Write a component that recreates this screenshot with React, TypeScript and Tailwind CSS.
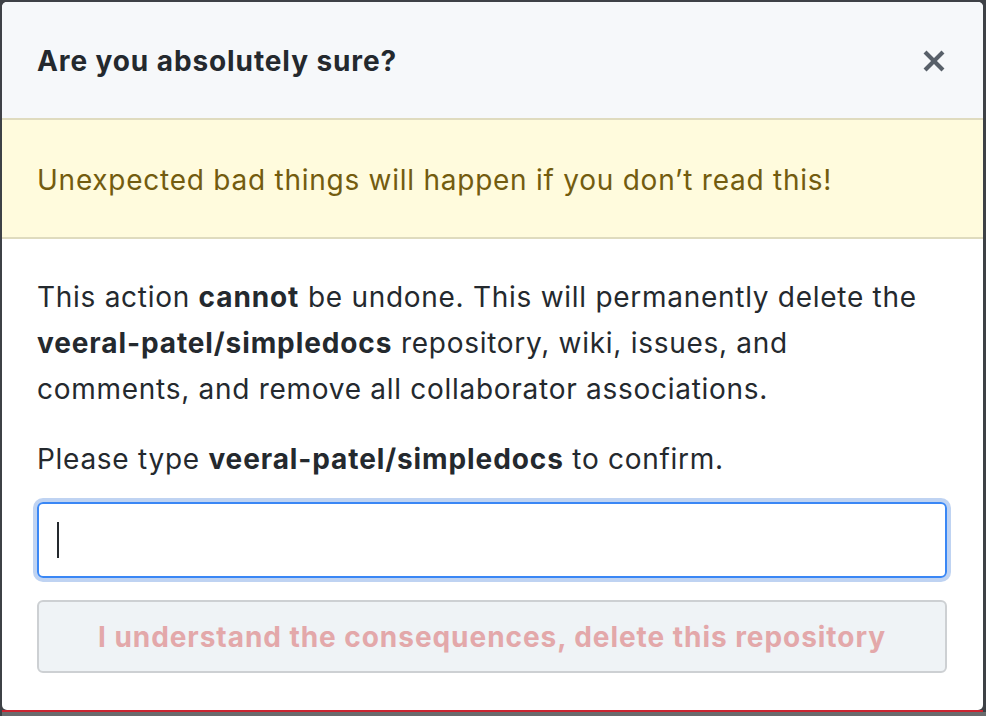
import React from "react";

const font = { fontFamily: "Inter, 'Noto Sans', 'Liberation Sans', sans-serif" };

function CloseIcon() {
  return (
    <svg width="24" height="32" viewBox="0 0 12 16" className="fill-[#586069]">
      <path d="M7.48 8l3.75 3.75-1.48 1.48L6 9.48l-3.75 3.75-1.48-1.48L4.52 8 .77 4.25l1.48-1.48L6 6.52l3.75-3.75 1.48 1.48L7.48 8z" />
    </svg>
  );
}

export default function App() {
  return (
    <div className="w-[986px] h-[716px] bg-[#3e4146] overflow-hidden pt-[2px] pl-[2px]" style={font}>
      <div className="w-[981px] flex flex-col">
        <div className="h-[708px] bg-white rounded-[5px] overflow-hidden flex flex-col">
          {/* header */}
          <div className="h-[116px] bg-[#f6f8fa] flex items-center justify-between pl-[35px] pr-[37px] pt-[2px]">
            <h1 className="text-[28px] font-bold text-[#24292e] tracking-[0.9px]">Are you absolutely sure?</h1>
            <button className="flex items-center justify-center">
              <CloseIcon />
            </button>
          </div>
          {/* warning flash */}
          <div className="h-[121px] bg-[#fffbdd] border-y-2 border-[#dfdbbe] flex items-center pl-[35px] pt-[3px]">
            <p className="text-[28px] text-[#735c0f] tracking-[0.75px]">Unexpected bad things will happen if you don’t read this!</p>
          </div>
          {/* body */}
          <div className="flex flex-col px-[35px] pt-[35px] text-[#24292e] text-[28px] leading-[46px] tracking-[0.72px]">
            <p>
              This action <strong className="font-bold tracking-[0.9px]">cannot</strong> be undone. This will permanently delete the
              <br />
              <strong className="font-bold tracking-[0.9px]">veeral-patel/simpledocs</strong> repository, wiki, issues, and
              <br />
              comments, and remove all collaborator associations.
            </p>
            <p className="mt-[24px]">
              Please type <strong className="font-bold tracking-[0.9px]">veeral-patel/simpledocs</strong> to confirm.
            </p>
            <div className="mt-[20px] h-[76px] w-[910px] rounded-[6px] border-2 border-[#3a87f5] ring-4 ring-[#bfd3f2] flex items-center pl-[18px]">
              <span className="block w-[2px] h-[36px] bg-[#24292e]" />
            </div>
            <button
              disabled
              className="mt-[22px] h-[73px] w-[910px] rounded-[6px] border-2 border-[#cdd0d3] bg-[#eff3f6] text-[28px] font-bold tracking-[0.95px] text-[#e3a8aa] flex items-center justify-center"
            >
              I understand the consequences, delete this repository
            </button>
          </div>
        </div>
        <div className="h-[2px] bg-[#cb2431]" />
      </div>
      <div className="h-[10px] bg-[#6a6b6d]" />
    </div>
  );
}
